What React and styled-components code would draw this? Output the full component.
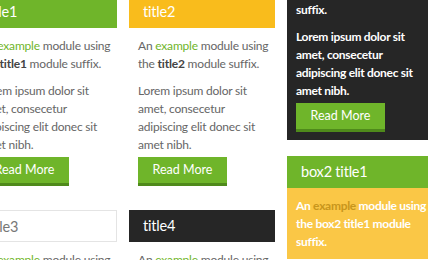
import React from 'react';
import styled, { createGlobalStyle } from 'styled-components';

const GlobalStyle = createGlobalStyle`
  html, body {
    margin: 0;
    padding: 0;
    background: #fff;
    overflow: hidden;
  }
  body {
    font-family: Lato, "Open Sans", sans-serif;
    width: 428px;
    height: 260px;
  }
`;

const colors = {
  green: "#6fb52a",
  greenDark: "#4f8a1b",
  yellow: "#f9bc1c",
  dark: "#262626",
  sand: "#fac746",
  text: "#666",
};

const Page = styled("div")`
  display: grid;
  grid-template-columns: repeat(3, 146px);
  column-gap: 12px;
  align-items: start;
  margin: -4px 0 0 -29px;
`;

const Column = styled("div")`
  display: flex;
  flex-direction: column;
  gap: 16px;
  margin-top: ${p => p.$offset || 0}px;
`;

const Module = styled("div")`
  background: ${p => p.$bg || "#fff"};
  padding-bottom: 8px;
`;

const Header = styled("h3")`
  margin: 0;
  height: 32px;
  line-height: 32px;
  padding: 0 14px;
  font-size: 14.5px;
  letter-spacing: -0.2px;
  font-weight: 400;
  color: ${p => p.$color || "#fff"};
  background: ${p => p.$bg};
  border: ${p => (p.$outline ? "1px solid #e4e4e4" : "none")};
  box-sizing: border-box;
`;

const Body = styled("div")`
  padding: 9px 2px 0 9px;
  font-size: 12px;
  letter-spacing: ${p => (p.$bold ? "-0.3px" : "-0.2px")};
  line-height: 18px;
  color: ${p => p.$color || colors.text};
  font-weight: ${p => (p.$bold ? 700 : 400)};
`;

const P = styled("p")`
  margin: 0;
  & + & {
    margin-top: 9px;
  }
`;

const Link = styled("span")`
  color: ${p => p.$color || colors.green};
`;

const Strong = styled("b")`
  font-weight: 700;
  color: ${p => p.$color || "#444"};
`;

const Button = styled("button")`
  display: block;
  margin-top: 3px;
  height: 29px;
  width: 89px;
  padding: 0;
  border: none;
  border-bottom: 3px solid ${colors.greenDark};
  background: ${colors.green};
  color: #fff;
  font-family: inherit;
  font-size: 12.5px;
  font-weight: 400;
  letter-spacing: 0;
  line-height: 26px;
  white-space: nowrap;
  box-sizing: border-box;
`;

const Intro = ({ name, linkColor, strongColor }) => (
  <P>
    An <Link $color={linkColor}>example</Link> module using the{" "}
    <Strong $color={strongColor}>{name}</Strong> module suffix.
  </P>
);

const Lorem = () => (
  <P>Lorem ipsum dolor sit amet, consecetur adipiscing elit donec sit amet nibh.</P>
);

const App = () => {
  return (
    <>
      <GlobalStyle />
      <Page>
        <Column>
          <Module>
            <Header $bg={colors.green}>title1</Header>
            <Body>
              <Intro name="title1" />
              <Lorem />
              <Button>Read More</Button>
            </Body>
          </Module>
          <Module>
            <Header $bg="#fff" $color="#777" $outline>title3</Header>
            <Body>
              <Intro name="title3" />
            </Body>
          </Module>
        </Column>

        <Column>
          <Module>
            <Header $bg={colors.yellow}>title2</Header>
            <Body>
              <Intro name="title2" />
              <Lorem />
              <Button>Read More</Button>
            </Body>
          </Module>
          <Module>
            <Header $bg={colors.dark}>title4</Header>
            <Body>
              <Intro name="title4" />
            </Body>
          </Module>
        </Column>

        <Column $offset={-72}>
          <Module $bg={colors.dark}>
            <Header $bg={colors.dark}>box1 title1</Header>
            <Body $color="#fff" $bold>
              <Intro name="box1 title1" linkColor={colors.green} strongColor="#fff" />
              <Lorem />
              <Button>Read More</Button>
            </Body>
          </Module>
          <Module $bg={colors.sand}>
            <Header $bg={colors.green}>box2 title1</Header>
            <Body $color="#fff" $bold>
              <Intro name="box2 title1" linkColor="#c8961c" strongColor="#fff" />
            </Body>
          </Module>
        </Column>
      </Page>
    </>
  );
};

export default App;
